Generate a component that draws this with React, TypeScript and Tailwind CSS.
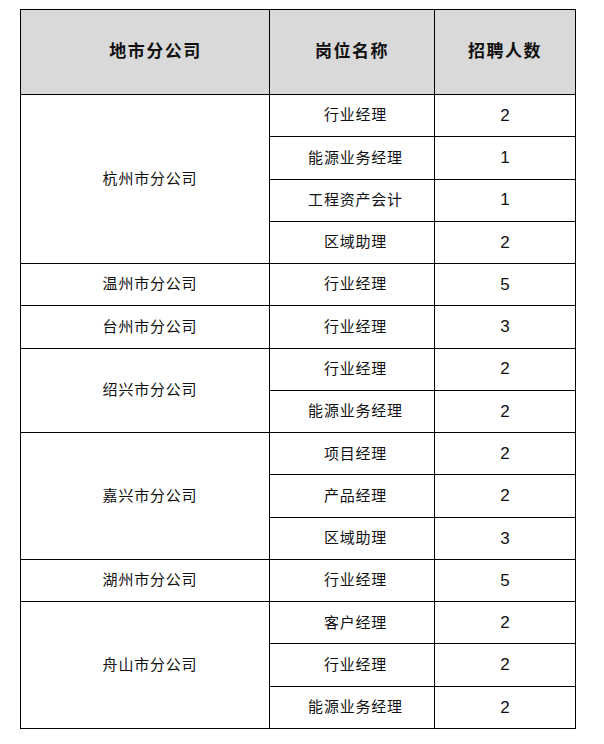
import React from 'react';

type Row = { branch: string; jobs: [string, number][] };

const data: Row[] = [
  { branch: '杭州市分公司', jobs: [['行业经理', 2], ['能源业务经理', 1], ['工程资产会计', 1], ['区域助理', 2]] },
  { branch: '温州市分公司', jobs: [['行业经理', 5]] },
  { branch: '台州市分公司', jobs: [['行业经理', 3]] },
  { branch: '绍兴市分公司', jobs: [['行业经理', 2], ['能源业务经理', 2]] },
  { branch: '嘉兴市分公司', jobs: [['项目经理', 2], ['产品经理', 2], ['区域助理', 3]] },
  { branch: '湖州市分公司', jobs: [['行业经理', 5]] },
  { branch: '舟山市分公司', jobs: [['客户经理', 2], ['行业经理', 2], ['能源业务经理', 2]] },
];

const cell = 'border border-black text-center align-middle p-0 h-[42.27px]';
const head =
  'border border-black bg-[#d9d9d9] text-center align-middle p-0 h-[85px] font-bold text-[17px] tracking-[1.5px]';

const App: React.FC = () => {
  return (
    <div className="min-h-screen bg-white pt-[9px] pl-[20px] font-['Liberation_Sans','Noto_Sans_CJK_SC',sans-serif] text-[15px] text-[#111]">
      <table className="table-fixed border-collapse w-[555px]">
        <colgroup>
          <col className="w-[249px]" />
          <col className="w-[165px]" />
          <col className="w-[141px]" />
        </colgroup>
        <thead>
          <tr>
            <th className={head + ' pl-[21px]'}>地市分公司</th>
            <th className={head}>岗位名称</th>
            <th className={head}>招聘人数</th>
          </tr>
        </thead>
        <tbody>
          {data.map((r) =>
            r.jobs.map(([job, n], i) => (
              <tr key={r.branch + i}>
                {i === 0 && (
                  <td rowSpan={r.jobs.length} className={cell + ' pl-[10px] tracking-[0.8px]'}>
                    {r.branch}
                  </td>
                )}
                <td className={cell + ' pl-[7px] tracking-[0.8px]'}>{job}</td>
                <td className={cell + ' text-[17px]'}>{n}</td>
              </tr>
            ))
          )}
        </tbody>
      </table>
    </div>
  );
};

export default App;
